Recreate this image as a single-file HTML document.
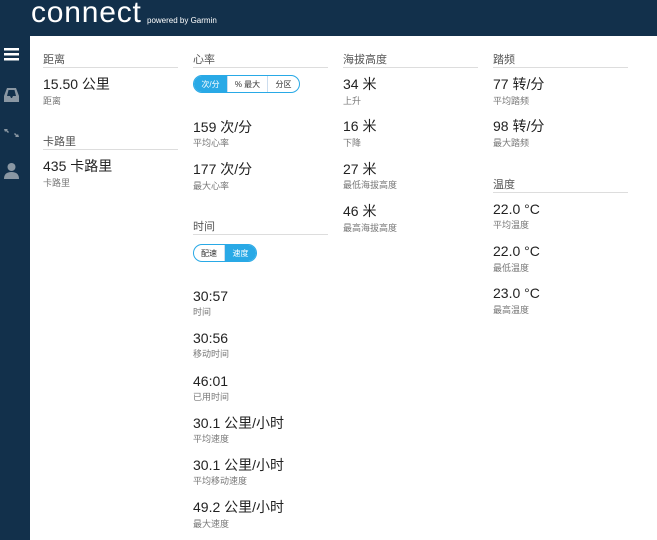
<!DOCTYPE html>
<html><head><meta charset="utf-8"><style>
*{margin:0;padding:0;box-sizing:border-box}
body{width:657px;height:540px;overflow:hidden;background:#fff;font-family:"Liberation Sans","Noto Sans CJK SC",sans-serif;position:relative}
#hd{position:absolute;left:0;top:0;width:657px;height:36px;background:#12304b}
#sb{position:absolute;left:0;top:36px;width:30px;height:504px;background:#12304b}
.logo{position:absolute;left:31px;top:-3px;color:#fff;font-size:30px;line-height:31px;letter-spacing:0.8px;font-family:"Liberation Sans",sans-serif}
.pw{position:absolute;left:147px;top:16px;color:#fff;font-size:8px}
.t{position:absolute;font-size:11px;color:#555;line-height:13px;height:15px;width:135px;border-bottom:1px solid #ddd;padding-top:1px}
.v{position:absolute;font-size:14px;color:#222;line-height:16px;white-space:nowrap}
.l{position:absolute;font-size:9px;color:#777;line-height:11px;white-space:nowrap}
.tg{position:absolute;display:flex;height:18px;border:1px solid #29a9e6;border-radius:9px;overflow:hidden;font-size:8px}
.tg span{display:flex;align-items:center;justify-content:center;color:#333;border-right:1px solid #cde}
.tg span:last-child{border-right:none}
.tg .on{background:#29a9e6;color:#fff}
</style></head><body>
<div id="hd"><div class="logo">connect</div><div class="pw">powered by Garmin</div></div>
<div id="sb">
<svg width="30" height="160" viewBox="0 0 30 160">
<g fill="#fff"><rect x="4" y="12" width="15" height="2.5"/><rect x="4" y="17" width="15" height="2.5"/><rect x="4" y="22" width="15" height="2.5"/></g>
<g fill="#8a97a3"><path d="M4 60 L7 52 H16 L19 60 V66 H4 Z M7 60 H10 L11 62 H12 L13 60 H16 L14.5 54 H8.5 Z"/>
<path d="M4 93 l4 0 -1 1 2 2 -1 1 -2 -2 -1 1z M19 101 l-4 0 1 -1 -2 -2 1 -1 2 2 1 -1z"/>
<circle cx="11.5" cy="131" r="4"/><path d="M4 143 Q4 136 11.5 136 Q19 136 19 143 Z"/></g>
</svg></div>

<div class="t" style="left:43px;top:53px">距离</div>
<div class="v" style="left:43px;top:76px">15.50 公里</div>
<div class="l" style="left:43px;top:96px">距离</div>
<div class="t" style="left:43px;top:135px">卡路里</div>
<div class="v" style="left:43px;top:158px">435 卡路里</div>
<div class="l" style="left:43px;top:178px">卡路里</div>

<div class="t" style="left:193px;top:53px">心率</div>
<div class="tg" style="left:193px;top:75px;width:107px"><span class="on" style="width:34px">次/分</span><span style="width:40px">% 最大</span><span style="width:31px">分区</span></div>
<div class="v" style="left:193px;top:119px">159 次/分</div>
<div class="l" style="left:193px;top:138px">平均心率</div>
<div class="v" style="left:193px;top:161px">177 次/分</div>
<div class="l" style="left:193px;top:181px">最大心率</div>
<div class="t" style="left:193px;top:220px">时间</div>
<div class="tg" style="left:193px;top:244px;width:64px"><span style="width:32px">配速</span><span class="on" style="width:32px">速度</span></div>
<div class="v" style="left:193px;top:288px">30:57</div>
<div class="l" style="left:193px;top:307px">时间</div>
<div class="v" style="left:193px;top:330px">30:56</div>
<div class="l" style="left:193px;top:349px">移动时间</div>
<div class="v" style="left:193px;top:373px">46:01</div>
<div class="l" style="left:193px;top:392px">已用时间</div>
<div class="v" style="left:193px;top:415px">30.1 公里/小时</div>
<div class="l" style="left:193px;top:434px">平均速度</div>
<div class="v" style="left:193px;top:457px">30.1 公里/小时</div>
<div class="l" style="left:193px;top:476px">平均移动速度</div>
<div class="v" style="left:193px;top:499px">49.2 公里/小时</div>
<div class="l" style="left:193px;top:519px">最大速度</div>

<div class="t" style="left:343px;top:53px">海拔高度</div>
<div class="v" style="left:343px;top:76px">34 米</div>
<div class="l" style="left:343px;top:96px">上升</div>
<div class="v" style="left:343px;top:118px">16 米</div>
<div class="l" style="left:343px;top:138px">下降</div>
<div class="v" style="left:343px;top:161px">27 米</div>
<div class="l" style="left:343px;top:180px">最低海拔高度</div>
<div class="v" style="left:343px;top:203px">46 米</div>
<div class="l" style="left:343px;top:223px">最高海拔高度</div>

<div class="t" style="left:493px;top:53px">踏频</div>
<div class="v" style="left:493px;top:76px">77 转/分</div>
<div class="l" style="left:493px;top:96px">平均踏频</div>
<div class="v" style="left:493px;top:118px">98 转/分</div>
<div class="l" style="left:493px;top:138px">最大踏频</div>
<div class="t" style="left:493px;top:178px">温度</div>
<div class="v" style="left:493px;top:201px">22.0 °C</div>
<div class="l" style="left:493px;top:220px">平均温度</div>
<div class="v" style="left:493px;top:243px">22.0 °C</div>
<div class="l" style="left:493px;top:263px">最低温度</div>
<div class="v" style="left:493px;top:285px">23.0 °C</div>
<div class="l" style="left:493px;top:305px">最高温度</div>
</body></html>
